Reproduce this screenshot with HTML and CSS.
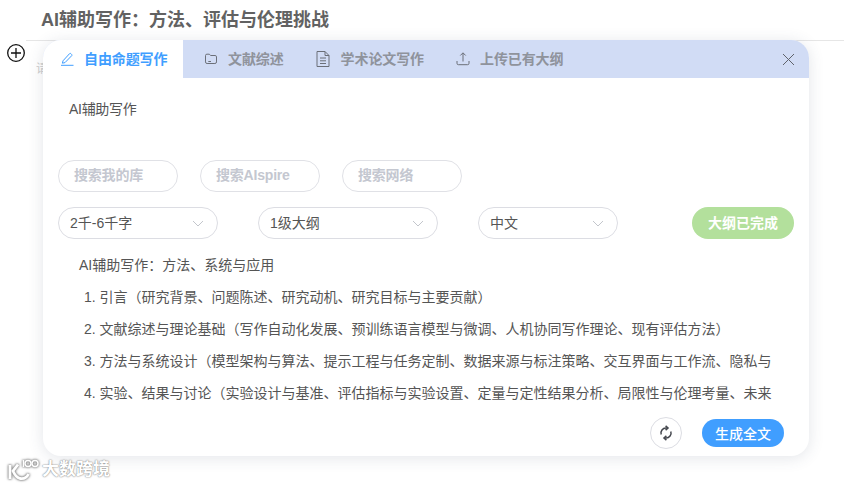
FILE: index.html
```html
<!DOCTYPE html>
<html lang="zh">
<head>
<meta charset="utf-8">
<title>AI辅助写作</title>
<link rel="stylesheet" href="styles.css">
</head>
<body>
<header class="page-title"><h1>AI辅助写作：方法、评估与伦理挑战</h1></header>
<div class="doc-row">
  <svg class="plus" width="20" height="20" viewBox="0 0 20 20"><circle cx="10" cy="10" r="8.3" fill="none" stroke="#111" stroke-width="1.3"/><path d="M5 10h10M10 5v10" stroke="#111" stroke-width="1.3"/></svg>
  <span class="behind">请</span>
</div>

<section class="modal">
  <nav class="tabs">
    <div class="tab active">
      <svg width="16" height="16" viewBox="0 0 16 16" fill="none" stroke="#409eff" stroke-width="1"><path d="M4 9.8 10.6 2.6q.6-.6 1.2 0l.9.9q.6.6 0 1.2L6 11.6l-2.6.6zM2 14.3h12.5"/></svg>
      <span>自由命题写作</span>
    </div>
    <div class="tab t2">
      <svg width="14" height="14" viewBox="0 0 14 14" fill="none" stroke="#6b6f78" stroke-width="1"><path d="M1.5 3.6q0-1.4 1.4-1.4h2.5l1.2 1.3h4.5q1.4 0 1.4 1.4v5q0 1.6-1.6 1.6H3.1q-1.6 0-1.6-1.6z"/><path d="M4.3 9.5h2.7"/></svg>
      <span>文献综述</span>
    </div>
    <div class="tab t3">
      <svg width="16" height="18" viewBox="0 0 16 18" fill="none" stroke="#6b6f78" stroke-width="1"><path d="M2 1.5h8l4 4v11H2z"/><path d="M10 1.5v4h4M5 8h6M5 10.8h6M5 13.5h6"/></svg>
      <span>学术论文写作</span>
    </div>
    <div class="tab t4">
      <svg width="16" height="16" viewBox="0 0 16 16" fill="none" stroke="#6b6f78" stroke-width="1"><path d="M8 10.5V2M5.3 4.5 8 1.8l2.7 2.7M2 10v2.3q0 1.4 1.4 1.4h9.2q1.4 0 1.4-1.4V10"/></svg>
      <span>上传已有大纲</span>
    </div>
    <button class="close" aria-label="关闭">
      <svg width="13" height="13" viewBox="0 0 13 13" fill="none" stroke="#5f636b" stroke-width="1"><path d="M1 1l11 11M12 1 1 12"/></svg>
    </button>
  </nav>

  <div class="body">
    <p class="topic">AI辅助写作</p>

    <div class="chips">
      <span class="chip">搜索我的库</span>
      <span class="chip">搜索AIspire</span>
      <span class="chip">搜索网络</span>
    </div>

    <div class="options">
      <div class="select s1"><span>2千-6千字</span><svg width="12" height="7" viewBox="0 0 12 7" fill="none" stroke="#c3c6cc"><path d="M1 1l5 5 5-5"/></svg></div>
      <div class="select s2"><span>1级大纲</span><svg width="12" height="7" viewBox="0 0 12 7" fill="none" stroke="#c3c6cc"><path d="M1 1l5 5 5-5"/></svg></div>
      <div class="select s3"><span>中文</span><svg width="12" height="7" viewBox="0 0 12 7" fill="none" stroke="#c3c6cc"><path d="M1 1l5 5 5-5"/></svg></div>
      <button class="done"><span>大纲已完成</span></button>
    </div>

    <div class="outline">
      <p class="o-title">AI辅助写作：方法、系统与应用</p>
      <p class="o-item">1. 引言（研究背景、问题陈述、研究动机、研究目标与主要贡献）</p>
      <p class="o-item">2. 文献综述与理论基础（写作自动化发展、预训练语言模型与微调、人机协同写作理论、现有评估方法）</p>
      <p class="o-item">3. 方法与系统设计（模型架构与算法、提示工程与任务定制、数据来源与标注策略、交互界面与工作流、隐私与</p>
      <p class="o-item">4. 实验、结果与讨论（实验设计与基准、评估指标与实验设置、定量与定性结果分析、局限性与伦理考量、未来</p>
    </div>

    <footer class="actions">
      <button class="refresh" aria-label="刷新">
        <svg width="16" height="16" viewBox="0 0 16 16" fill="none" stroke="#44474e" stroke-width="1.5"><path d="M3.2 9.6A5 5 0 0 1 8.2 3h1.4"/><path d="M12.8 6.4A5 5 0 0 1 7.8 13H6.4"/><path d="M7.6.9 10 3 7.6 5.1M8.4 10.9 6 13l2.4 2.1"/></svg>
      </button>
      <button class="generate">生成全文</button>
    </footer>
  </div>
</section>

<div class="watermark">
  <svg class="wm-logo" width="31" height="22" viewBox="0 0 31 22" fill="none" stroke="#fff">
    <path d="M2 6v14" stroke-width="2.8"/>
    <path d="M10 5.5 5 12q2.5 6 7 7.5 6 1 8.5-4.5" stroke-width="2.8"/>
    <circle cx="20" cy="4.5" r="3" stroke-width="1.5"/>
    <circle cx="27" cy="4.5" r="3" stroke-width="1.5"/>
    <path d="M15.5 1v7" stroke-width="1.5"/>
  </svg>
  <span>大数跨境</span>
</div>
</body>
</html>
```
FILE: styles.css
```css
* { box-sizing: border-box; }
html, body { margin: 0; padding: 0; }
body {
  width: 844px;
  height: 487px;
  overflow: hidden;
  background: #fff;
  font-family: "Liberation Sans", "Noto Sans CJK SC", sans-serif;
  color: #555;
}
p { margin: 0; }
button { font-family: inherit; border: 0; padding: 0; }

.page-title {
  height: 41px;
  margin-left: 26px;
  padding-left: 15px;
  border-bottom: 1px solid #e6e6e6;
}
.page-title h1 {
  margin: 0;
  font-size: 18px;
  line-height: 40px;
  font-weight: 700;
  color: #626262;
}
.doc-row {
  display: flex;
  align-items: flex-start;
  padding: 2px 0 0 6px;
}
.plus { display: block; }
.behind {
  margin: 16px 0 0 10px;
  font-size: 12px;
  color: #ccc;
}

.modal {
  position: absolute;
  left: 43px;
  top: 40px;
  width: 766px;
  height: 416px;
  background: #fff;
  border-radius: 18px;
  overflow: hidden;
  box-shadow: 0 2px 16px rgba(60, 70, 100, .14);
}
.tabs {
  display: flex;
  align-items: center;
  height: 38px;
  background: #d1dcf5;
}
.tab {
  display: flex;
  align-items: center;
  height: 100%;
  font-size: 14px;
  font-weight: 700;
  letter-spacing: -.1px;
  color: #8f939c;
  white-space: nowrap;
}
.tab span { padding-bottom: 2px; }
.tab.active {
  width: 140px;
  padding-left: 16px;
  gap: 9px;
  background: #fff;
  color: #409eff;
}
.t2 { margin-left: 21px; gap: 10px; }
.t3 { margin-left: 31px; gap: 10px; }
.t4 { margin-left: 31px; gap: 9px; }
.close {
  margin-left: auto;
  margin-right: 14px;
  width: 13px;
  height: 13px;
  background: none;
  display: flex;
}

.body { padding: 0 15px; }
.topic {
  margin: 22px 0 0 11px;
  font-size: 14px;
  line-height: 18px;
  letter-spacing: -.3px;
  color: #555;
}
.chips {
  display: flex;
  gap: 22px;
  margin-top: 42px;
}
.chip {
  width: 120px;
  height: 32px;
  padding-left: 15px;
  border: 1px solid #e0e1e6;
  border-radius: 16px;
  font-size: 14px;
  font-weight: 700;
  line-height: 29px;
  letter-spacing: -.2px;
  color: #c4c7d0;
}
.options {
  display: flex;
  align-items: center;
  margin-top: 15px;
}
.select {
  display: flex;
  align-items: center;
  justify-content: space-between;
  height: 32px;
  padding: 0 13px 0 11px;
  border: 1px solid #dcdde3;
  border-radius: 16px;
  font-size: 14px;
  color: #555;
}
.select span { padding-bottom: 2px; }
.s1 { width: 160px; }
.s2 { width: 180px; margin-left: 40px; }
.s3 { width: 140px; margin-left: 40px; }
.done {
  width: 102px;
  height: 32px;
  margin-left: 74px;
  padding-bottom: 2px;
  border-radius: 16px;
  background: #b3e09c;
  color: #fff;
  font-size: 14px;
  font-weight: 700;
}
.outline {
  margin-top: 10px;
  width: 714px;
  white-space: nowrap;
  overflow: hidden;
  font-size: 14px;
  line-height: 32px;
  color: #555;
}
.o-title { padding-left: 21px; }
.o-item { padding-left: 26px; overflow: hidden; }
.actions {
  display: flex;
  align-items: center;
  justify-content: flex-end;
  gap: 20px;
  margin-top: 8px;
  padding-right: 10px;
}
.refresh {
  width: 32px;
  height: 32px;
  border: 1px solid #dcdde3;
  border-radius: 50%;
  background: #fff;
  display: flex;
  align-items: center;
  justify-content: center;
}
.generate {
  width: 82px;
  height: 28px;
  border-radius: 14px;
  background: #409eff;
  color: #fff;
  font-size: 14px;
  font-weight: 500;
}

.watermark {
  position: absolute;
  left: 8px;
  top: 459px;
  display: flex;
  align-items: center;
  gap: 3px;
  color: #fff;
  font-size: 17px;
  font-weight: 700;
  line-height: 22px;
  text-shadow: 0 0 2px #8c8c8c, 0 0 1px #8c8c8c;
}
.wm-logo { filter: drop-shadow(0 0 1px #777) drop-shadow(0 0 1px #aaa); }
```
